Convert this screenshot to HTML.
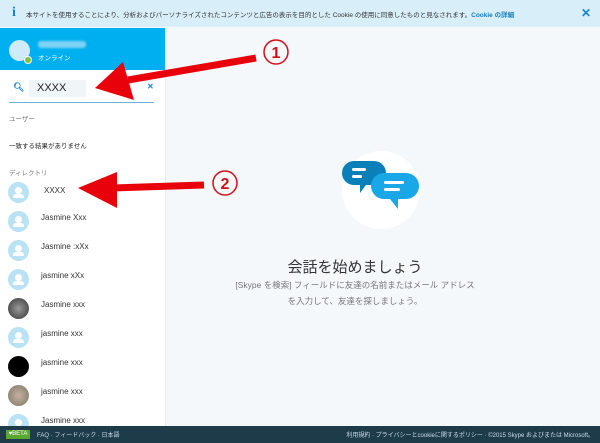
<!DOCTYPE html><html><head><meta charset="utf-8"><style>
body{margin:0;width:600px;height:443px;overflow:hidden;position:relative;font-family:"Liberation Sans","Noto Sans CJK JP",sans-serif;background:#f4f8fb}
.a{position:absolute}
.av{position:absolute;left:8px;width:21px;height:21px;border-radius:50%;background:#b9e2f5}
.av.u::after{content:"";position:absolute;left:7px;top:5px;width:7px;height:7px;border-radius:50%;background:#fff}
.av.u::before{content:"";position:absolute;left:5px;top:12px;width:11px;height:4px;border-radius:3px 3px 0 0;background:#fff}
.nm{position:absolute;left:41px;font-size:8px;color:#333}
</style></head><body>
<div class="a" style="left:0;top:0;width:600px;height:27px;background:#d8eef8"></div>
<div class="a" style="left:12px;top:5px;font-size:14px;color:#1a86c8;font-weight:bold;font-family:'Liberation Serif',serif">i</div>
<div class="a" style="left:26px;top:9px;font-size:6.5px;color:#333;white-space:nowrap">本サイトを使用することにより、分析およびパーソナライズされたコンテンツと広告の表示を目的とした Cookie の使用に同意したものと見なされます。<b style="color:#1a7fc0">Cookie の詳細</b></div>
<div class="a" style="left:581px;top:6px;font-size:12px;color:#1a86c8;font-weight:bold">✕</div>
<div class="a" style="left:0;top:28px;width:165px;height:398px;background:#fff;border-right:1px solid #e3eaf0"></div>
<div class="a" style="left:0;top:28px;width:165px;height:42px;background:#00aff0"></div>
<div class="a" style="left:9px;top:40px;width:21px;height:21px;border-radius:50%;background:#cfeaf8"></div>
<div class="a" style="left:24px;top:56px;width:6px;height:6px;border-radius:50%;background:#7dc242;border:1px solid #fff"></div>
<div class="a" style="left:38px;top:41px;width:48px;height:7px;background:#7fd3f5;border-radius:3px;filter:blur(1px)"></div>
<div class="a" style="left:38px;top:52px;font-size:6.5px;color:#fff">オンライン</div>
<div class="a" style="left:13px;top:82px;font-size:9px;color:#1a86c8;font-weight:bold">🔍︎</div>
<div class="a" style="left:29px;top:80px;width:57px;height:17px;background:#f0f5f8"></div>
<div class="a" style="left:37px;top:82px;font-size:11px;color:#222">XXXX</div>
<div class="a" style="left:147px;top:82px;font-size:8px;color:#1a86c8;font-weight:bold">✕</div>
<div class="a" style="left:9px;top:102px;width:145px;height:1px;background:#6fb3d0"></div>
<div class="a" style="left:9px;top:113px;font-size:6.5px;color:#777">ユーザー</div>
<div class="a" style="left:9px;top:140px;font-size:6.5px;color:#222">一致する結果がありません</div>
<div class="a" style="left:9px;top:167px;font-size:6.5px;color:#777">ディレクトリ</div>
<div class="av u" style="top:182px"></div><div class="nm" style="top:186px;left:44px">XXXX</div>
<div class="av u" style="top:211px"></div><div class="nm" style="top:213px">Jasmine Xxx</div>
<div class="av u" style="top:240px"></div><div class="nm" style="top:242px">Jasmine :xXx</div>
<div class="av u" style="top:269px"></div><div class="nm" style="top:271px">jasmine xXx</div>
<div class="av" style="top:298px;background:radial-gradient(circle,#999,#333)"></div><div class="nm" style="top:300px">Jasmine xxx</div>
<div class="av u" style="top:327px"></div><div class="nm" style="top:329px">jasmine xxx</div>
<div class="av" style="top:356px;background:#000"></div><div class="nm" style="top:358px">jasmine xxx</div>
<div class="av" style="top:385px;background:radial-gradient(circle,#c9b0a0,#776)"></div><div class="nm" style="top:387px">jasmine xxx</div>
<div class="av u" style="top:414px"></div><div class="nm" style="top:416px">Jasmine xxx</div>
<div class="a" style="left:342px;top:151px;width:78px;height:78px;border-radius:50%;background:#fff"></div>
<svg class="a" style="left:340px;top:155px" width="90" height="70" viewBox="0 0 90 70">
<path d="M14 6h20a12 12 0 0 1 0 24h-8l-6 8v-8h-6a12 12 0 0 1 0-24z" fill="#0b7fb8"/>
<rect x="12" y="13" width="14" height="3" rx="1.5" fill="#fff"/><rect x="12" y="20" width="10" height="3" rx="1.5" fill="#fff"/>
<path d="M44 18h22a13 13 0 0 1 0 26h-8v10l-8-10h-6a13 13 0 0 1 0-26z" fill="#1aa7e8"/>
<rect x="44" y="26" width="20" height="3" rx="1.5" fill="#fff"/><rect x="44" y="33" width="16" height="3" rx="1.5" fill="#fff"/>
</svg>
<div class="a" style="left:255px;top:256px;width:200px;text-align:center;font-size:15px;color:#333">会話を始めましょう</div>
<div class="a" style="left:200px;top:277px;width:310px;text-align:center;font-size:8.5px;color:#777;line-height:16px;white-space:nowrap">[Skype を検索] フィールドに友達の名前またはメール アドレス<br>を入力して、友達を探しましょう。</div>
<div class="a" style="left:0;top:426px;width:600px;height:17px;background:#1d3b49"></div>
<div class="a" style="left:6px;top:430px;width:24px;height:9px;background:#5aa832;font-size:6px;color:#fff;text-align:center;line-height:9px">♥BETA</div>
<div class="a" style="left:37px;top:430px;font-size:6px;color:#cde">FAQ · フィードバック · 日本語</div>
<div class="a" style="right:6px;top:430px;font-size:6px;color:#cde;white-space:nowrap">利用規約 · プライバシーとcookieに関するポリシー · ©2015 Skype およびまたは Microsoft。</div>
<svg class="a" style="left:0;top:0" width="600" height="443">
<path d="M256 58L128 80" stroke="#e8000b" stroke-width="7"/>
<polygon points="95,88 123,62 134,100" fill="#e8000b"/>
<path d="M204 185L112 188" stroke="#e8000b" stroke-width="7"/>
<polygon points="78,188 117,172 117,208" fill="#e8000b"/>
<circle cx="276" cy="52" r="12" fill="none" stroke="#d01018" stroke-width="1.5"/>
<text x="276" y="58" font-size="16" font-weight="bold" fill="#d01018" text-anchor="middle" font-family="Liberation Sans">1</text>
<circle cx="225" cy="183" r="12" fill="none" stroke="#d01018" stroke-width="1.5"/>
<text x="225" y="189" font-size="16" font-weight="bold" fill="#d01018" text-anchor="middle" font-family="Liberation Sans">2</text>
</svg>
</body></html>
